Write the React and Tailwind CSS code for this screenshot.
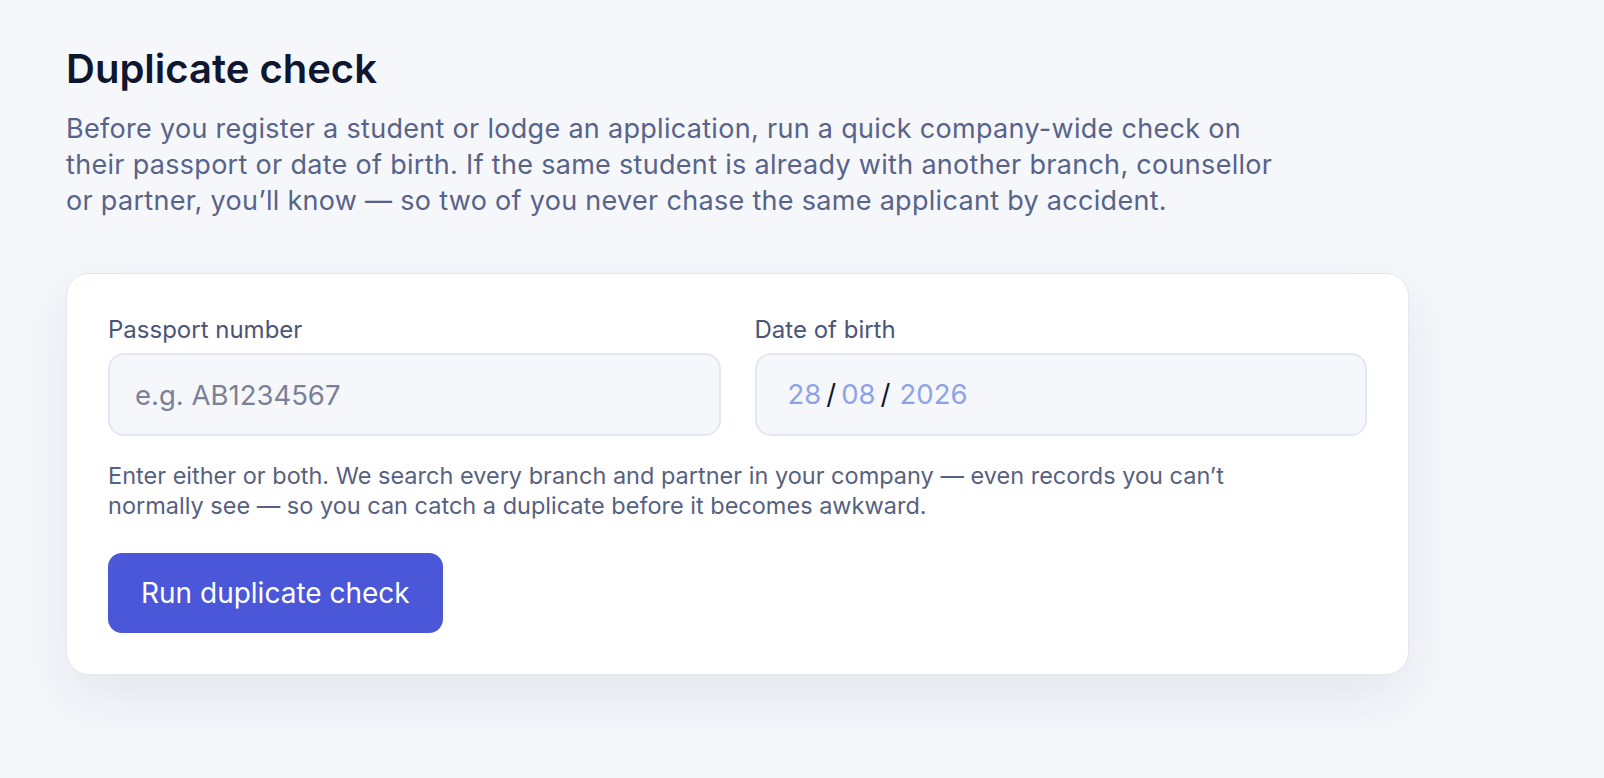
export default function App() {
  return (
    <div
      className="min-h-screen bg-[#f6f7fb] pl-[66px] pt-[45px]"
      style={{ fontFamily: 'Inter, "Noto Sans", sans-serif' }}
    >
      {/* Header */}
      <h1 className="text-[40px] leading-[48px] font-semibold text-[#0f1730]">
        Duplicate check
      </h1>
      <p className="mt-[18px] text-[27px] leading-[36px] text-[#58638a] tracking-[0.3px]">
        Before you register a student or lodge an application, run a quick company-wide check on
        <br />
        their passport or date of birth. If the same student is already with another branch, counsellor
        <br />
        or partner, you’ll know — so two of you never chase the same applicant by accident.
      </p>

      {/* Card */}
      <div className="mt-[54px] w-[1343px] bg-white border border-[#e3e7f1] rounded-[23px] shadow-[0_22px_56px_rgba(30,41,80,0.08)] px-[41px] pt-[40px] pb-[41px]">
        <div className="grid grid-cols-2 gap-[34px]">
          <label className="flex flex-col">
            <span className="text-[24px] leading-[32px] text-[#4a5578]">Passport number</span>
            <input
              type="text"
              placeholder="e.g. AB1234567"
              className="mt-[7px] h-[83px] rounded-[16px] border-2 border-[#e3e7f1] bg-[#f6f7fb] px-[25px] text-[27.5px] text-[#0f1730] placeholder:text-[#7a8196] outline-none"
            />
          </label>
          <label className="flex flex-col">
            <span className="text-[24px] leading-[32px] text-[#4a5578]">Date of birth</span>
            <div className="mt-[7px] h-[83px] rounded-[16px] border-2 border-[#e3e7f1] bg-[#f6f7fb] pl-[31px] flex items-center text-[27.5px]">
              <span className="text-[#8ea3e6]">28</span>
              <span className="text-[#0f1730] mx-[5px]">/</span>
              <span className="text-[#8ea3e6]">08</span>
              <span className="text-[#0f1730] ml-[5px] mr-[9px]">/</span>
              <span className="text-[#8ea3e6]">2026</span>
            </div>
          </label>
        </div>

        <p className="mt-[25px] text-[23.5px] leading-[30px] text-[#56617f]">
          Enter either or both. We search every branch and partner in your company — even records you can’t
          <br />
          normally see — so you can catch a duplicate before it becomes awkward.
        </p>

        <button className="mt-[32px] h-[80px] px-[33px] rounded-[14px] bg-[#4a57d8] text-white text-[28px]">
          Run duplicate check
        </button>
      </div>
    </div>
  )
}
